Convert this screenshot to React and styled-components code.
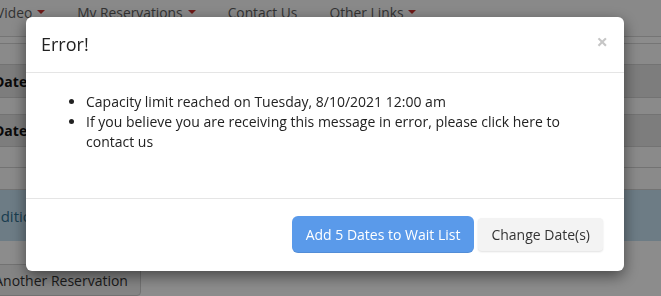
import React from "react";
import styled, { createGlobalStyle } from "styled-components";

const GlobalStyle = createGlobalStyle`
  html, body {
    margin: 0;
    padding: 0;
    width: 661px;
    height: 296px;
    overflow: hidden;
    background: #fff;
    font-family: "Open Sans", "Liberation Sans", sans-serif;
    font-size: 14px;
    color: #333;
  }
`;

const Page = styled.div`
  width: 700px;
  margin-left: -20px;
`;

const NavBar = styled.nav`
  display: flex;
  align-items: center;
  height: 36px;
  border-bottom: 1px solid #d6d6d6;
  background: #f9f9f9;
  margin-bottom: 6px;
`;

const NavItem = styled.div`
  display: flex;
  align-items: center;
  gap: 5px;
  padding: 0 15px 0 ${({ $first }) => ($first ? "16px" : "17px")};
  height: 24px;
  color: #5e5e5e;
  font-size: 13.8px;
  margin-top: -12px;
`;

const Caret = styled.span`
  width: 0;
  height: 0;
  border-left: 4px solid transparent;
  border-right: 4px solid transparent;
  border-top: 4px solid #c9302c;
`;

const Table = styled.div`
  border-top: 1px solid #d6d6d6;
`;

const Row = styled.div`
  height: ${({ $h }) => $h}px;
  display: flex;
  align-items: center;
  padding-left: 14px;
  border-bottom: 1px solid #d2d2d2;
  background: ${({ $dark }) => ($dark ? "#e3e3e3" : "#fbfbfb")};
  font-weight: 700;
  color: #111;
`;

const Alert = styled.div`
  height: 51px;
  display: flex;
  align-items: center;
  padding-left: 2px;
  background: #c6e2f3;
  color: #31708f;
  font-size: 15px;
`;

const PageButton = styled.div`
  display: inline-flex;
  align-items: center;
  margin: 23px 0 0 -44px;
  height: 30px;
  padding: 0 12px 0 18px;
  background: #f1f1f1;
  border: 1px solid #cfcfcf;
  border-radius: 4px;
  color: #333;
  font-size: 14px;
`;

const Backdrop = styled.div`
  position: fixed;
  inset: 0;
  background: rgba(0, 0, 0, 0.45);
  display: flex;
  align-items: flex-start;
  padding: 17px 0 0 26px;
`;

const Dialog = styled.div`
  width: 598px;
  background: #fff;
  border-radius: 6px;
  box-shadow: 0 5px 15px rgba(0, 0, 0, 0.5);
  overflow: hidden;
`;

const Header = styled.div`
  display: flex;
  align-items: center;
  justify-content: space-between;
  padding: 15px 16px 15px 15px;
  border-bottom: 1px solid #e5e5e5;
`;

const Title = styled.h4`
  margin: 0;
  font-size: 18px;
  font-weight: 400;
  line-height: 25px;
  color: #222;
`;

const Close = styled.button`
  border: 0;
  background: none;
  padding: 0;
  font-family: "Open Sans", "Liberation Sans", sans-serif;
  font-size: 20px;
  font-weight: 700;
  line-height: 1;
  color: #c6c6c6;
  margin-top: -6px;
`;

const Body = styled.div`
  padding: 19px 15px 46px;
`;

const List = styled.ul`
  margin: 0;
  padding-left: 45px;
  line-height: 20px;
  color: #222;
`;

const Link = styled.a`
  color: #222;
  text-decoration: none;
`;

const Footer = styled.div`
  display: flex;
  justify-content: flex-end;
  align-items: center;
  gap: 4px;
  padding: 17px 21px 18px 15px;
  border-top: 1px solid #e5e5e5;
`;

const Button = styled.button`
  font-family: "Open Sans", "Liberation Sans", sans-serif;
  font-size: 14px;
  border: 0;
  cursor: pointer;
  height: ${({ $primary }) => ($primary ? "37px" : "33px")};
  padding: ${({ $primary }) => ($primary ? "0 14px" : "0 13px")};
  border-radius: ${({ $primary }) => ($primary ? "6px" : "4px")};
  background: ${({ $primary }) => ($primary ? "#5a9aea" : "#f3f3f3")};
  color: ${({ $primary }) => ($primary ? "#fff" : "#333")};
  box-shadow: ${({ $primary }) =>
    $primary ? "inset 0 -1px 0 rgba(0,0,0,0.08)" : "0 1px 2px rgba(0,0,0,0.12)"};
`;

export default function App() {
  return (
    <>
      <GlobalStyle />
      <Page>
        <NavBar>
          <NavItem $first>Video <Caret /></NavItem>
          <NavItem>My Reservations <Caret /></NavItem>
          <NavItem>Contact Us</NavItem>
          <NavItem>Other Links <Caret /></NavItem>
        </NavBar>
        <Table>
          <Row $h={20} />
          <Row $h={32} $dark>Date(s):</Row>
          <Row $h={16} />
          <Row $h={31} $dark>Date(s):</Row>
          <Row $h={20} />
          <Row $h={21} />
        </Table>
        <Alert>Additional information</Alert>
        <PageButton>Make Another Reservation</PageButton>
      </Page>
      <Backdrop>
        <Dialog>
          <Header>
            <Title>Error!</Title>
            <Close aria-label="Close">×</Close>
          </Header>
          <Body>
            <List>
              <li>Capacity limit reached on Tuesday, 8/10/2021 12:00 am</li>
              <li>
                If you believe you are receiving this message in error, please{" "}
                <Link href="#">click here to contact us</Link>
              </li>
            </List>
          </Body>
          <Footer>
            <Button $primary>Add 5 Dates to Wait List</Button>
            <Button>Change Date(s)</Button>
          </Footer>
        </Dialog>
      </Backdrop>
    </>
  );
}
